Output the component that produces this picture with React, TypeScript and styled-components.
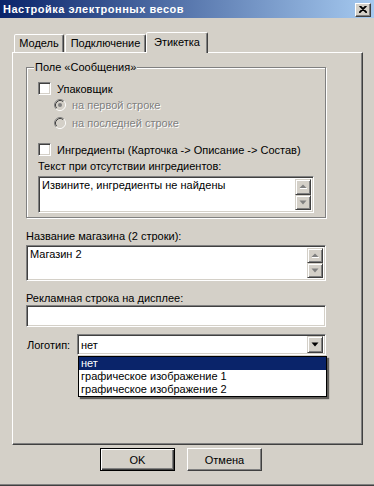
import React from "react";
import styled, { createGlobalStyle, css } from "styled-components";

const Global = createGlobalStyle`
  html, body { margin: 0; padding: 0; background: #D4D0C8; }
  * { box-sizing: border-box; }
`;

const sunken = css`
  border: 1px solid;
  border-color: #808080 #ffffff #ffffff #808080;
  box-shadow: inset 1px 1px #404040, inset -1px -1px #D4D0C8;
`;

const raised = css`
  border: 1px solid;
  border-color: #ffffff #404040 #404040 #ffffff;
  box-shadow: inset -1px -1px #808080;
`;

const Window = styled.div`
  width: 374px;
  height: 486px;
  background: #D4D0C8;
  display: flex;
  flex-direction: column;
  border-bottom: 1px solid #404040;
  box-shadow: inset 0 -1px #808080;
  font-family: "Liberation Sans", Arial, sans-serif;
  font-size: 11px;
  color: #000;
`;

const TitleBar = styled.div`
  height: 18px;
  flex: none;
  display: flex;
  align-items: center;
  justify-content: space-between;
  padding: 0 3px 0 3px;
  background: linear-gradient(to right, #0A246A, #A6CAF0);
`;

const Title = styled.span`
  color: #fff;
  font-weight: bold;
  font-size: 11px;
  letter-spacing: 0.5px;
`;

const CloseBtn = styled.div`
  width: 16px;
  height: 14px;
  margin-top: 1px;
  background: #D4D0C8;
  ${raised};
  display: flex;
  align-items: center;
  justify-content: center;
`;

const Body = styled.div`
  flex: 1;
  display: flex;
  flex-direction: column;
  padding: 14px 11px 0 12px;
`;

const TabRow = styled.div`
  display: flex;
  align-items: flex-end;
  height: 20px;
  padding-left: 2px;
`;

const Tab = styled.div<{ $w: number; $ml: number; $active?: boolean }>`
  width: ${(p) => p.$w}px;
  margin-left: ${(p) => p.$ml}px;
  height: ${(p) => (p.$active ? 21 : 18)}px;
  border: 1px solid;
  border-bottom: none;
  border-color: #ffffff #404040 transparent #ffffff;
  border-radius: 2px 2px 0 0;
  box-shadow: inset -1px 0 #808080;
  background: #D4D0C8;
  display: flex;
  justify-content: center;
  padding-top: ${(p) => (p.$active ? 3 : 2)}px;
  line-height: 13px;
  ${(p) =>
    p.$active &&
    css`
      position: relative;
      z-index: 1;
      margin-bottom: -1px;
    `}
`;

const Panel = styled.div`
  height: 393px;
  width: 351px;
  ${raised};
  display: flex;
  flex-direction: column;
  padding: 14px 36px 0 13px;
`;

const Group = styled.div`
  position: relative;
  height: 151px;
  border: 1px solid #808080;
  box-shadow: inset 1px 1px #fff, 1px 1px #fff;
  display: flex;
  flex-direction: column;
  padding: 14px 11px 0 11px;
`;

const Legend = styled.span`
  position: absolute;
  top: -7px;
  left: 7px;
  padding: 0 1px;
  background: #D4D0C8;
  line-height: 13px;
`;

const Row = styled.div<{ $mt?: number; $indent?: number }>`
  display: flex;
  align-items: center;
  height: 13px;
  gap: 6px;
  margin-top: ${(p) => p.$mt ?? 0}px;
  padding-left: ${(p) => p.$indent ?? 0}px;
  white-space: nowrap;
`;

const CheckBox = styled.div`
  width: 13px;
  height: 13px;
  flex: none;
  background: #fff;
  ${sunken};
`;

const Disabled = styled.span`
  color: #808080;
  text-shadow: 1px 1px #fff;
`;

const Label = styled.div<{ $mt?: number }>`
  margin-top: ${(p) => p.$mt ?? 0}px;
  height: 13px;
  line-height: 13px;
  white-space: nowrap;
`;

const Memo = styled.div<{ $mt?: number; $h: number }>`
  margin-top: ${(p) => p.$mt ?? 0}px;
  height: ${(p) => p.$h}px;
  background: #fff;
  ${sunken};
  padding: 2px;
  display: flex;
`;

const MemoText = styled.div`
  flex: 1;
  padding-left: 1px;
  line-height: 13px;
`;

const ScrollCol = styled.div`
  width: 16px;
  display: flex;
  flex-direction: column;
`;

const ScrollBtn = styled.div`
  flex: 1;
  background: #D4D0C8;
  border: 1px solid;
  border-color: #D4D0C8 #404040 #404040 #D4D0C8;
  box-shadow: inset 1px 1px #fff, inset -1px -1px #808080;
  display: flex;
  align-items: center;
  justify-content: center;
`;

const Input = styled.div<{ $mt?: number }>`
  margin-top: ${(p) => p.$mt ?? 0}px;
  height: 22px;
  background: #fff;
  ${sunken};
`;

const LogoRow = styled.div`
  margin-top: 7px;
  display: flex;
  align-items: center;
  height: 21px;
`;

const LogoLabel = styled.span`
  width: 51px;
  padding-left: 1px;
`;

const Combo = styled.div`
  position: relative;
  flex: 1;
  height: 21px;
  background: #fff;
  ${sunken};
  padding: 2px;
  display: flex;
  align-items: center;
`;

const ComboText = styled.span`
  flex: 1;
  padding-left: 1px;
`;

const ComboBtn = styled.div`
  width: 16px;
  height: 17px;
  background: #D4D0C8;
  border: 1px solid;
  border-color: #D4D0C8 #404040 #404040 #D4D0C8;
  box-shadow: inset 1px 1px #fff, inset -1px -1px #808080;
  display: flex;
  align-items: center;
  justify-content: center;
`;

const DropList = styled.div`
  position: absolute;
  top: 21px;
  left: 0;
  width: 249px;
  background: #fff;
  border: 1px solid #000;
  box-shadow: 2px 2px 1px rgba(0, 0, 0, 0.55);
  z-index: 5;
`;

const DropItem = styled.div<{ $sel?: boolean }>`
  height: 13px;
  line-height: 13px;
  padding-left: 2px;
  white-space: nowrap;
  background: ${(p) => (p.$sel ? "#0A246A" : "#fff")};
  color: ${(p) => (p.$sel ? "#fff" : "#000")};
`;

const ButtonRow = styled.div`
  display: flex;
  gap: 12px;
  margin-top: 3px;
  padding-left: 88px;
`;

const Button = styled.div<{ $default?: boolean }>`
  width: 75px;
  height: 23px;
  display: flex;
  align-items: center;
  justify-content: center;
  background: #D4D0C8;
  ${(p) =>
    p.$default
      ? css`
          border: 1px solid #000;
          box-shadow: inset 1px 1px #fff, inset -1px -1px #404040, inset -2px -2px #808080;
        `
      : css`
          ${raised};
        `}
`;

const UpArrow = () => (
  <svg width="8" height="5" viewBox="0 0 8 5">
    <polygon points="4,0.5 7.5,4 0.5,4" fill="#808080" />
    <line x1="1" y1="4.5" x2="8" y2="4.5" stroke="#fff" strokeWidth="1" />
  </svg>
);

const DownArrow = ({ color = "#808080" }: { color?: string }) => (
  <svg width="8" height="5" viewBox="0 0 8 5">
    <polygon points="0.5,0.5 7.5,0.5 4,4.5" fill={color} />
  </svg>
);

const Radio = ({ checked }: { checked?: boolean }) => (
  <svg width="12" height="12" viewBox="0 0 12 12" style={{ flex: "none" }}>
    <circle cx="6" cy="6" r="5" fill="#D4D0C8" />
    <path d="M2.11 9.89 A5.5 5.5 0 0 1 9.89 2.11" fill="none" stroke="#808080" strokeWidth="1" />
    <path d="M9.89 2.11 A5.5 5.5 0 0 1 2.11 9.89" fill="none" stroke="#fff" strokeWidth="1" />
    <path d="M2.82 9.18 A4.5 4.5 0 0 1 9.18 2.82" fill="none" stroke="#404040" strokeWidth="1" />
    <path d="M9.18 2.82 A4.5 4.5 0 0 1 2.82 9.18" fill="none" stroke="#D4D0C8" strokeWidth="1" />
    {checked && <circle cx="6" cy="6" r="2" fill="#808080" />}
  </svg>
);

const Scroll = () => (
  <ScrollCol>
    <ScrollBtn>
      <UpArrow />
    </ScrollBtn>
    <ScrollBtn>
      <DownArrow />
    </ScrollBtn>
  </ScrollCol>
);

export default function App() {
  return (
    <Window>
      <Global />
      <TitleBar>
        <Title>Настройка электронных весов</Title>
        <CloseBtn>
          <svg width="8" height="7" viewBox="0 0 8 7">
            <path d="M0.5 0 L7.5 7 M1.5 0 L8 6.5 M7.5 0 L0.5 7 M6.5 0 L0 6.5" stroke="#000" strokeWidth="1.1" />
          </svg>
        </CloseBtn>
      </TitleBar>
      <Body>
        <TabRow>
          <Tab $w={50} $ml={0}>Модель</Tab>
          <Tab $w={81} $ml={1}>Подключение</Tab>
          <Tab $w={62} $ml={0} $active>
            Этикетка
          </Tab>
        </TabRow>
        <Panel>
          <Group>
            <Legend>Поле «Сообщения»</Legend>
            <Row>
              <CheckBox />
              <span>Упаковщик</span>
            </Row>
            <Row $mt={3} $indent={16}>
              <Radio checked />
              <Disabled>на первой строке</Disabled>
            </Row>
            <Row $mt={5} $indent={16}>
              <Radio />
              <Disabled>на последней строке</Disabled>
            </Row>
            <Row $mt={14}>
              <CheckBox />
              <span>Ингредиенты (Карточка -&gt; Описание -&gt; Состав)</span>
            </Row>
            <Label $mt={4}>Текст при отсутствии ингредиентов:</Label>
            <Memo $mt={3} $h={37}>
              <MemoText>Извините, ингредиенты не найдены</MemoText>
              <Scroll />
            </Memo>
          </Group>
          <Label $mt={12}>Название магазина (2 строки):</Label>
          <Memo $mt={2} $h={36}>
            <MemoText>Магазин 2</MemoText>
            <Scroll />
          </Memo>
          <Label $mt={11}>Рекламная строка на дисплее:</Label>
          <Input $mt={0} />
          <LogoRow>
            <LogoLabel>Логотип:</LogoLabel>
            <Combo>
              <ComboText>нет</ComboText>
              <ComboBtn>
                <DownArrow color="#000" />
              </ComboBtn>
              <DropList>
                <DropItem $sel>нет</DropItem>
                <DropItem>графическое изображение 1</DropItem>
                <DropItem>графическое изображение 2</DropItem>
              </DropList>
            </Combo>
          </LogoRow>
        </Panel>
        <ButtonRow>
          <Button $default>OK</Button>
          <Button>Отмена</Button>
        </ButtonRow>
      </Body>
    </Window>
  );
}
